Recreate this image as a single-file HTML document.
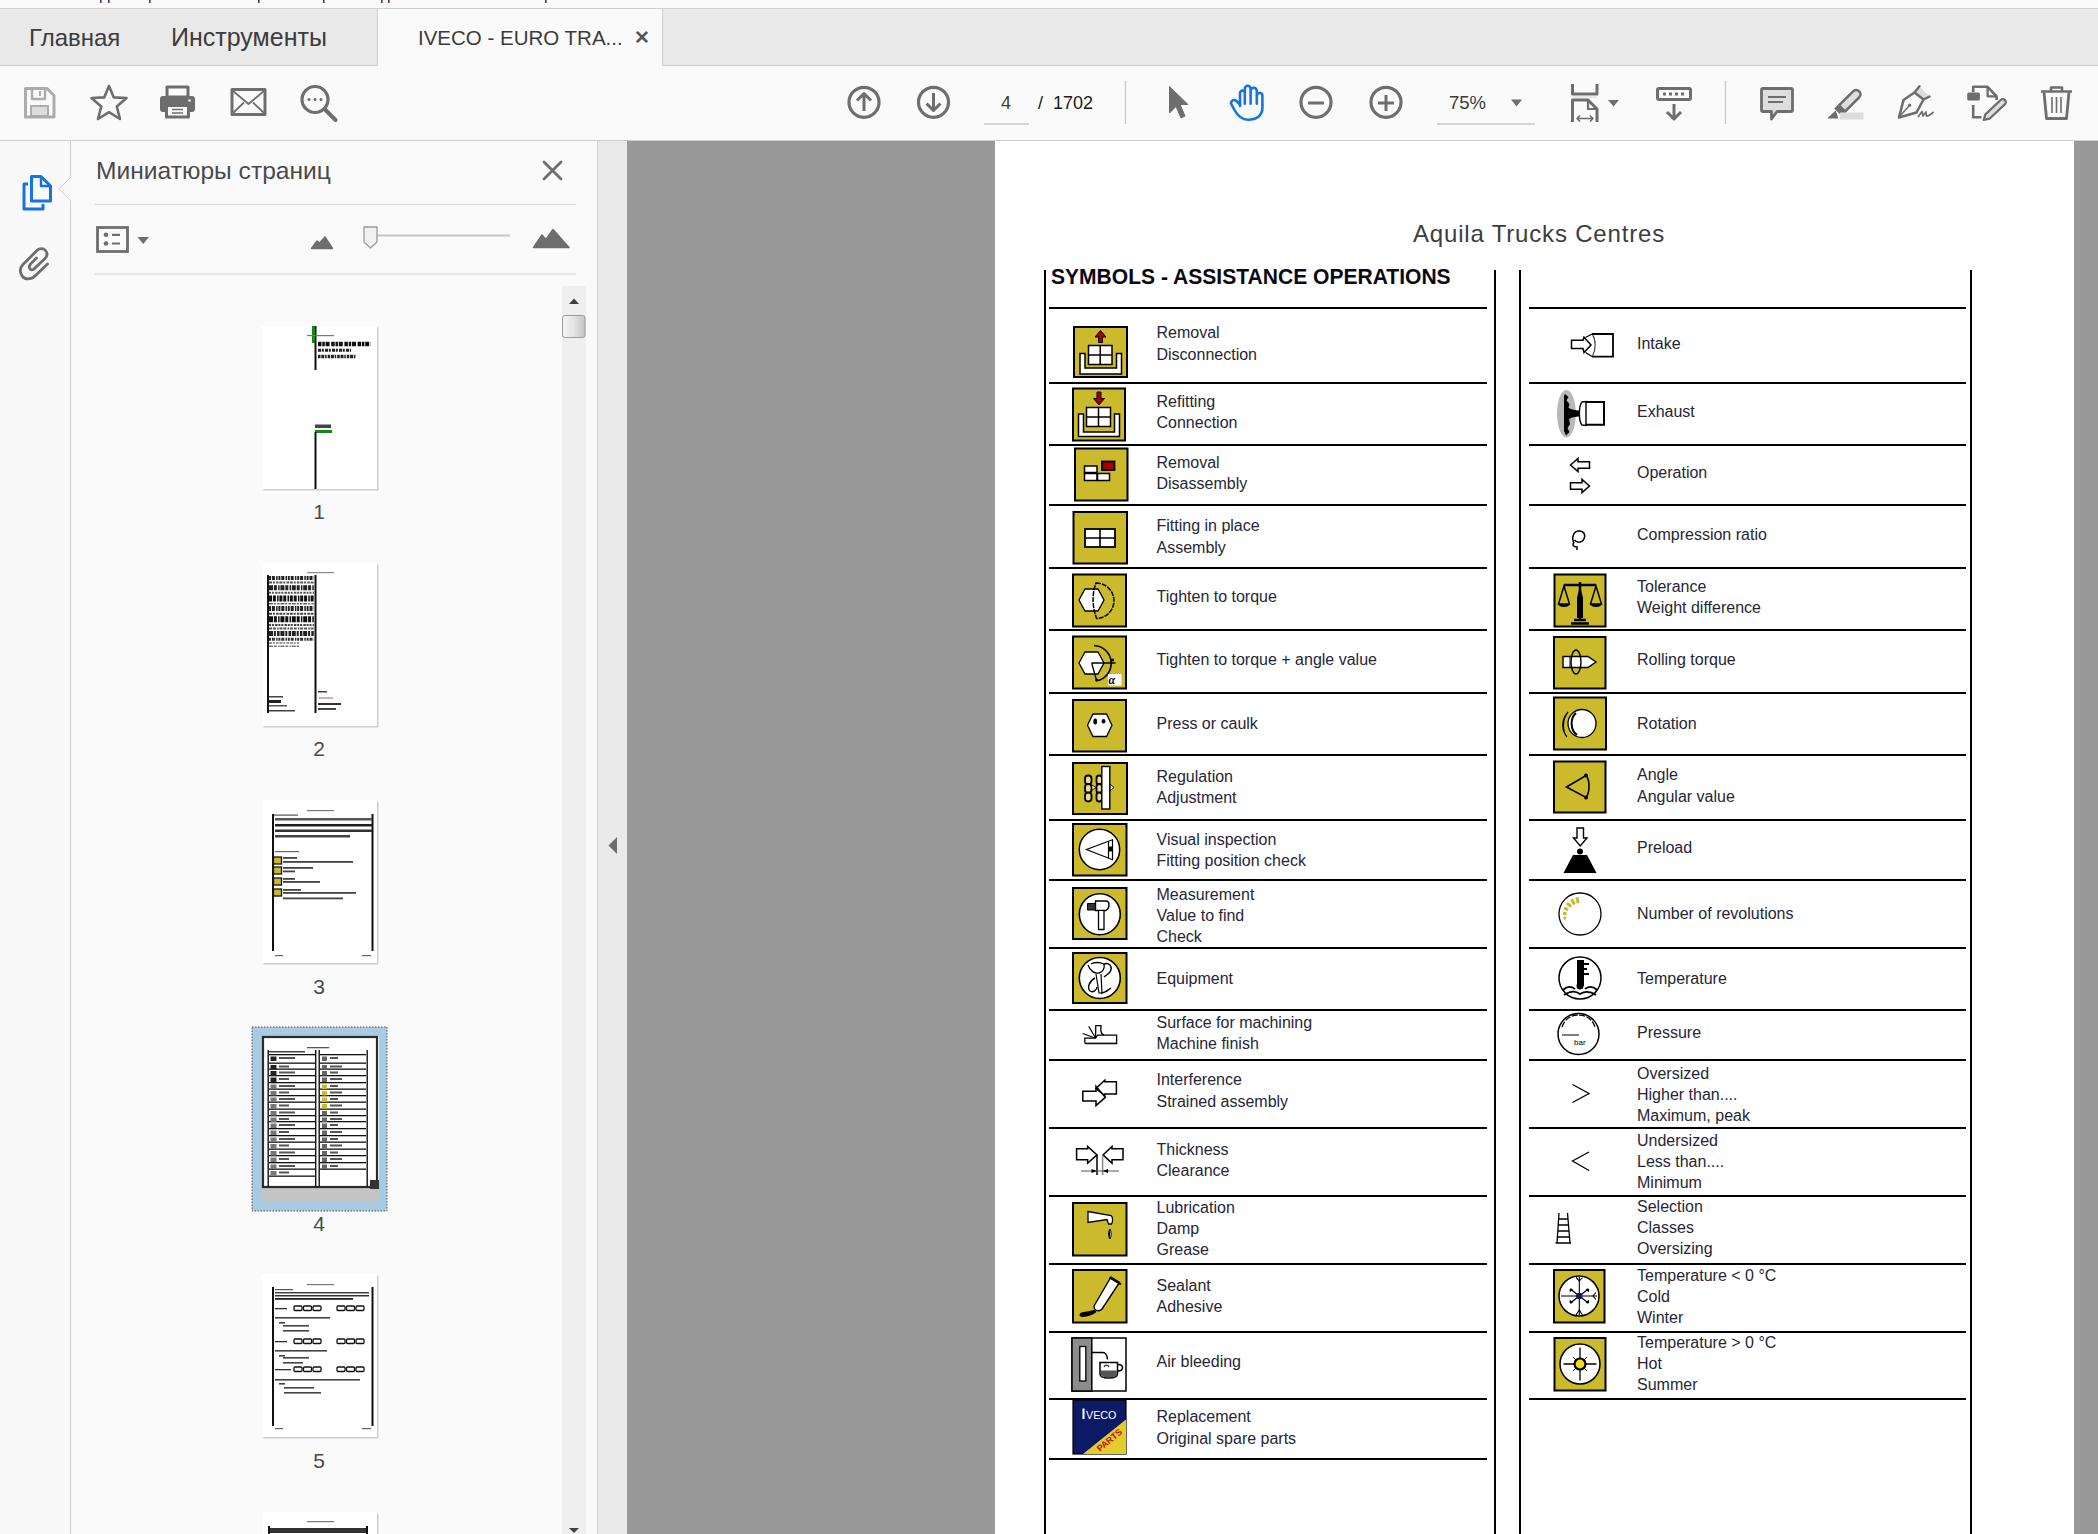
<!DOCTYPE html>
<html><head><meta charset="utf-8">
<style>
*{box-sizing:border-box;margin:0;padding:0}
html,body{width:2098px;height:1534px;overflow:hidden;background:#fafafa;font-family:"Liberation Sans",sans-serif}
.a{position:absolute}
#top{left:0;top:0;width:2098px;height:9px;background:#fafafa;border-bottom:1px solid #cdcdcd}
#tabs{left:0;top:9px;width:2098px;height:57px;background:#e9e9e9;border-bottom:1px solid #cdcdcd}
#atab{left:377px;top:9px;width:286px;height:57px;background:#fafafa;border-left:1px solid #cdcdcd;border-right:1px solid #cdcdcd}
.tt{font-size:23px;color:#3c3c3c;white-space:nowrap}
#tool{left:0;top:66px;width:2098px;height:75px;background:#fafafa}
#rail{left:0;top:141px;width:71px;height:1393px;background:#f9f9f9}
#panel{left:71px;top:141px;width:527px;height:1393px;background:#fafafa;border-right:1px solid #d3d3d3}
#split{left:598px;top:141px;width:29px;height:1393px;background:#eaeaea}
#doc{left:627px;top:141px;width:1471px;height:1393px;background:#999999}
#page{left:995px;top:141px;width:1079px;height:1393px;background:#fff}
svg{position:absolute;overflow:visible}
.ic{fill:none;stroke:#6e6e6e;stroke-width:3}
.pt{position:absolute;font-size:16px;color:#262636;white-space:nowrap;line-height:21px}
.hr{position:absolute;height:2px;background:#111}
.vr{position:absolute;width:2px;background:#111}
</style></head><body>
<div id="top" class="a"></div>
<svg class="a" style="left:0;top:0" width="600" height="8" viewBox="0 0 600 8"><rect x="100" y="0" width="1.6" height="3" fill="#553355"/><rect x="108" y="0" width="1.6" height="3" fill="#553355"/><rect x="149" y="0" width="1.6" height="3" fill="#553355"/><rect x="258" y="0" width="1.6" height="3" fill="#553355"/><rect x="323" y="0" width="1.6" height="3" fill="#553355"/><rect x="381" y="0" width="1.6" height="3" fill="#553355"/><rect x="388" y="0" width="1.6" height="3" fill="#553355"/><rect x="545" y="0" width="1.6" height="3" fill="#553355"/></svg><div id="tabs" class="a"></div>
<div id="atab" class="a"></div>
<div class="a tt" style="left:29px;top:24px;font-size:24px">Главная</div>
<div class="a tt" style="left:171px;top:23px;font-size:25px">Инструменты</div>
<div class="a tt" style="left:418px;top:26px;font-size:20.5px">IVECO - EURO TRA...</div>
<div id="tool" class="a"></div>

<svg class="a" style="left:0;top:0" width="2098" height="140" viewBox="0 0 2098 140">
<g fill="none" stroke="#6e6e6e" stroke-width="3" stroke-linejoin="round">
<!-- save (disabled) -->
<path d="M25.5,88.5 H47 L54,95.5 V117 H25.5 Z" stroke="#acacac" stroke-width="3"/>
<path d="M32,89 V99 H45 V89" stroke="#acacac" stroke-width="2.5"/>
<rect x="31" y="106" width="17" height="10" fill="#dcdcdc" stroke="#acacac" stroke-width="2"/>
<line x1="40" y1="91" x2="40" y2="96" stroke="#acacac" stroke-width="2"/>
<!-- star -->
<path d="M109.0,86 L113.8,97.4 L126.5,98.0 L116.8,106.5 L120,119 L109.0,112.2 L98,119 L101.2,106.5 L91.5,98.0 L104.2,97.4Z" stroke-width="2.6"/>
<!-- print -->
<rect x="167" y="87" width="21" height="10" stroke-width="3"/>
<rect x="160" y="96" width="35" height="16" rx="3" fill="#6e6e6e" stroke="none"/>
<rect x="166.5" y="105.5" width="22" height="11.5" fill="#fafafa" stroke-width="3"/>
<line x1="172" y1="109.5" x2="183" y2="109.5" stroke-width="1.5"/>
<line x1="172" y1="113" x2="183" y2="113" stroke-width="1.5"/>
<circle cx="189.5" cy="100.5" r="1.3" fill="#fafafa" stroke="none"/>
<!-- mail -->
<rect x="232" y="89.5" width="33" height="25" stroke-width="3"/>
<path d="M233,91 L248.5,104 L264,91 M233,113 L244,102.5 M264,113 L253,102.5" stroke-width="1.8"/>
<!-- search -->
<circle cx="315" cy="99.5" r="13" stroke-width="3.2"/>
<line x1="324.5" y1="109" x2="335.5" y2="120" stroke-width="4" stroke-linecap="round"/>
<circle cx="309" cy="99.5" r="1.5" fill="#6e6e6e" stroke="none"/>
<circle cx="315" cy="99.5" r="1.5" fill="#6e6e6e" stroke="none"/>
<circle cx="321" cy="99.5" r="1.5" fill="#6e6e6e" stroke="none"/>
<!-- up / down -->
<circle cx="864" cy="102.3" r="15" stroke-width="3.2"/>
<path d="M864,111 V94 M857,100.5 L864,93.5 L871,100.5" stroke-width="3"/>
<circle cx="933.5" cy="102.3" r="15" stroke-width="3.2"/>
<path d="M933.5,93 V110 M926.5,103.5 L933.5,110.5 L940.5,103.5" stroke-width="3"/>
<!-- page field underline -->
<line x1="984" y1="124" x2="1029" y2="124" stroke="#c8c8c8" stroke-width="1.5"/>
<line x1="1125.5" y1="81" x2="1125.5" y2="124" stroke="#cdcdcd" stroke-width="1.5"/>
<!-- cursor -->
<path d="M1169.5,86.5 L1188,104.5 L1180,104.5 L1185,116 L1181,118 L1176,106.5 L1169.5,113 Z" fill="#6e6e6e" stroke="#6e6e6e" stroke-width="1"/>
<!-- hand -->
<path d="M1240,106 V93 A2.4,2.4 0 0 1 1244.8,93 V103.8 M1244.8,93 V88.7 A2.9,2.9 0 0 1 1250.6,88.7 V103.8 M1250.6,90.9 A3.1,3.1 0 0 1 1256.8,90.9 V103.8 M1256.8,95.8 A2.8,2.8 0 0 1 1262.4,95.8 V108 C1262.4,115.5 1256.5,119.7 1248,119.7 C1241.5,119.7 1237.5,115.5 1234.5,110 L1231.5,104.5 C1229.8,101.5 1233.5,98.5 1236.5,101 L1240,104.5" stroke="#1473e6" stroke-width="2.6" stroke-linecap="round" stroke-linejoin="round"/>
<!-- zoom out / in -->
<circle cx="1316" cy="102.3" r="15" stroke-width="3.2"/>
<line x1="1308" y1="103" x2="1324" y2="103" stroke-width="3"/>
<circle cx="1386" cy="102.3" r="15" stroke-width="3.2"/>
<path d="M1378,103 H1394 M1386,95 V111" stroke-width="3"/>
<!-- zoom field -->
<path d="M1511,99.5 H1522 L1516.5,106.5 Z" fill="#6e6e6e" stroke="none"/>
<line x1="1437" y1="124" x2="1535" y2="124" stroke="#c8c8c8" stroke-width="1.5"/>
<!-- fit page -->
<path d="M1572.5,84 V94 H1597 V84" stroke-width="3"/>
<line x1="1573" y1="97" x2="1597" y2="97" stroke="#d6d6d6" stroke-width="1"/>
<path d="M1572.5,122 V100 H1588 L1597,109 V122" stroke-width="3"/>
<path d="M1588,100.5 V109 H1597" stroke-width="2.2"/>
<path d="M1577,118.5 H1593 M1580,115.5 L1577,118.5 L1580,121.5 M1590,115.5 L1593,118.5 L1590,121.5" stroke-width="1.6"/>
<path d="M1608,100 H1619 L1613.5,106.5 Z" fill="#6e6e6e" stroke="none"/>
<!-- scroll -->
<rect x="1657.5" y="88.5" width="33" height="11" rx="1.5" stroke-width="3"/>
<path d="M1663,94 h3 M1669,94 h3 M1675,94 h3 M1681,94 h3" stroke-width="3"/>
<path d="M1674,104 V119 M1667,112 L1674,119 L1681,112" stroke-width="3"/>
<line x1="1725.5" y1="81" x2="1725.5" y2="124" stroke="#cdcdcd" stroke-width="1.5"/>
<!-- comment -->
<path d="M1763,88.5 H1791 a1.5,1.5 0 0 1 1.5,1.5 V110 a1.5,1.5 0 0 1 -1.5,1.5 H1777 L1771.5,119 V111.5 H1763 a1.5,1.5 0 0 1 -1.5,-1.5 V90 a1.5,1.5 0 0 1 1.5,-1.5 Z" fill="#dedede" stroke-width="2.8"/>
<path d="M1768,97 H1786 M1768,102 H1783" stroke-width="2"/>
<!-- highlighter -->
<g transform="translate(1850.5,100) rotate(-45)">
<path d="M-12,-4.3 H8 A4.3,4.3 0 0 1 8,4.3 H-12 Z" fill="#dedede" stroke-width="2.6"/>
<rect x="-17.5" y="-5.6" width="6" height="11.2" fill="#6e6e6e" stroke="none"/>
</g>
<path d="M1828.5,118 L1835.5,111.5 L1837.5,118 Z" fill="#6e6e6e" stroke="#6e6e6e" stroke-width="1.2"/>
<rect x="1840" y="112.5" width="23.5" height="7" fill="#dcdcdc" stroke="none"/>
<!-- pen sign -->
<path d="M1919.5,86.5 L1930,97 L1923.5,99.5 L1914.5,92.5 Z" fill="#dcdcdc" stroke="none"/>
<path d="M1914.5,92.5 L1919.5,86.2 M1923.5,99.5 L1929.5,96.5" stroke-width="2.4" stroke-linecap="round"/>
<path d="M1899,117.5 L1903.5,100 L1914.5,92.5 L1923.5,99.5 L1916.5,112.5 Z" stroke-width="2.6"/>
<path d="M1899.5,116.5 L1909.5,105.5" stroke-width="1.5"/>
<circle cx="1909.7" cy="105.2" r="1.6" fill="#6e6e6e" stroke="none"/>
<path d="M1918.5,116.5 L1922,111.5 L1923,116 L1926,112 L1926.5,116 C1928,116.5 1930,115 1933,112.5" stroke-width="1.7" stroke-linecap="round"/>
<!-- edit page -->
<path d="M1973.2,92 V86.8 H1987.6 L1996.6,96.3 V100 M1973.2,105 V117.3 H1981.5" stroke-width="2.6"/>
<path d="M1987.6,87 V96.3 H1996.6" stroke-width="2.3"/>
<rect x="1967.2" y="92.5" width="12.7" height="8" rx="1.5" fill="#6e6e6e" stroke="none"/>
<g transform="translate(1994,110.4) rotate(-43)">
<path d="M-9,-3 H12 A3,3 0 0 1 12,3 H-9 L-14,0 Z" fill="#dedede" stroke-width="2.3" stroke-linejoin="round"/>
</g>
<!-- trash -->
<path d="M2041,91.5 H2072 M2051,91.5 V87.5 H2062 V91.5" stroke-width="2.6"/>
<path d="M2044,92 L2046.5,118.5 H2066.5 L2069,92" stroke-width="2.8"/>
<path d="M2052,97 V113 M2056.5,97 V113 M2061,97 V113" stroke-width="1.6"/>
</g>
<line x1="0" y1="140.5" x2="2098" y2="140.5" stroke="#cdcdcd" stroke-width="1.2"/>
</svg>
<div class="a tt" style="left:1001px;top:93px;font-size:18px;color:#3a3a3a">4</div>
<div class="a tt" style="left:1038px;top:93px;font-size:18px;color:#1a1a1a">/&nbsp;&nbsp;1702</div>
<div class="a tt" style="left:1449px;top:92px;font-size:18.5px;color:#3a3a3a">75%</div>
<div class="a tt" style="left:634px;top:27px;font-size:18.5px;color:#555;font-weight:bold">&#x2715;</div>
<div id="rail" class="a"></div>
<div id="panel" class="a"></div>
<div id="split" class="a"></div>
<div id="doc" class="a"></div>
<div id="page" class="a"></div>
<!-- rail + panel -->
<svg class="a" style="left:0;top:140px" width="627" height="1394" viewBox="0 140 627 1394">
<path d="M70.5,140 V177.5 L59,189 L70.5,200.5 V1534" fill="none" stroke="#cfcfcf" stroke-width="1"/>
<g fill="none" stroke="#1473e6" stroke-width="3" stroke-linejoin="round">
<path d="M31.5,176.5 H41 L50.5,186 V201 H31.5 Z"/>
<path d="M41,177 V186 H50" stroke-width="2.4"/>
<path d="M28,184 H24 V209 H43 V204"/>
</g>
<path d="M47.5,264 L35,276 C31,280 25,279.5 22.5,276.5 C19.5,273 19.5,268 23,264.5 L37,250.5 C39.5,248 43.5,248 45.5,250.5 C47.5,253 47.5,256 45,258.5 L34.5,268.5 C32.5,270.5 30,270 29.5,268 C29,266.5 29.5,265 31,263.5 L36.5,258" fill="none" stroke="#6e6e6e" stroke-width="2.8" stroke-linecap="round" stroke-linejoin="round"/>
<!-- close x -->
<path d="M544,162 L561,179 M561,162 L544,179" stroke="#6e6e6e" stroke-width="2.8" stroke-linecap="round"/>
<line x1="95" y1="204.5" x2="576" y2="204.5" stroke="#d2d2d2" stroke-width="1.2"/>
<line x1="95" y1="274" x2="576" y2="274" stroke="#d2d2d2" stroke-width="1.2"/>
<!-- list icon -->
<rect x="97.5" y="227.5" width="30" height="24" fill="none" stroke="#6e6e6e" stroke-width="2.8"/>
<circle cx="106" cy="234.8" r="2.3" fill="#6e6e6e"/><circle cx="106" cy="243.5" r="2.3" fill="#6e6e6e"/>
<path d="M112,234.8 H120 M112,243.5 H120" stroke="#6e6e6e" stroke-width="2.2"/>
<path d="M137.5,237 H149 L143.2,244 Z" fill="#6e6e6e"/>
<!-- small mountain -->
<path d="M311.5,248.5 L317,241 L319.5,243 L325,237 L332.5,248.5 Z" fill="#6e6e6e" stroke="#6e6e6e" stroke-width="1.5" stroke-linejoin="round"/>
<line x1="377" y1="235.5" x2="510" y2="235.5" stroke="#c6c6c6" stroke-width="2"/>
<path d="M364,227 H377 V242 L370.5,248 L364,242 Z" fill="#f1f1f1" stroke="#9a9a9a" stroke-width="1.3" stroke-linejoin="round"/>
<!-- big mountain -->
<path d="M533.5,247.5 L542,235 L546,239.5 L553,229.5 L569,247.5 Z" fill="#6e6e6e" stroke="#6e6e6e" stroke-width="1.5" stroke-linejoin="round"/>
<!-- scrollbar -->
<rect x="562" y="286" width="24" height="1248" fill="#efefef"/>
<path d="M569,304 L574,298.5 L579,304 Z" fill="#404040"/>
<defs><linearGradient id="thg" x1="0" x2="1" y1="0" y2="0"><stop offset="0" stop-color="#f4f4f4"/><stop offset="0.5" stop-color="#e4e4e4"/><stop offset="1" stop-color="#c4c4c4"/></linearGradient></defs><rect x="562.5" y="315.5" width="22.5" height="22" rx="2.5" fill="url(#thg)" stroke="#9a9a9a" stroke-width="1"/>
<path d="M569,1528 L574,1533 L579,1528 Z" fill="#404040"/>
<!-- splitter arrow -->
<path d="M617,837 V854 L608.5,845.5 Z" fill="#6e6e6e"/>
</svg>
<div class="a tt" style="left:96px;top:156.5px;font-size:24.6px;color:#4a4a4a">Миниатюры страниц</div>

<svg class="a" style="left:0;top:0" width="627" height="1534" viewBox="0 0 627 1534"><rect x="263.5" y="327.5" width="115" height="163" fill="#cfcfcf"/><rect x="262" y="326" width="115" height="163" fill="#fff"/><rect x="314.5" y="326" width="2" height="44" fill="#111"/><rect x="312" y="326" width="3" height="17" fill="#118a11"/><rect x="307" y="335" width="27" height="1.2" fill="#777"/><line x1="318" y1="344" x2="371" y2="344" stroke="#111" stroke-width="4.5" stroke-dasharray="3.5,0.8,2.5,0.8,4,1.6"/><line x1="318" y1="350.2" x2="351" y2="350.2" stroke="#222" stroke-width="3" stroke-dasharray="3,0.8,2,1.2"/><line x1="318" y1="356.5" x2="356" y2="356.5" stroke="#222" stroke-width="3.5" stroke-dasharray="2.5,0.8,3,0.8,1.5,1"/><rect x="315" y="424.5" width="16" height="3.5" fill="#444"/><rect x="315" y="430" width="17" height="3" fill="#118a11"/><rect x="314.5" y="432" width="2" height="57" fill="#111"/><rect x="263.5" y="564.5" width="115" height="163" fill="#cfcfcf"/><rect x="262" y="563" width="115" height="163" fill="#fff"/><rect x="307" y="572" width="27" height="1.2" fill="#888"/><rect x="267" y="575" width="2" height="138" fill="#111"/><rect x="314.5" y="575" width="2" height="138" fill="#111"/><line x1="269" y1="578.0" x2="314" y2="578.0" stroke="#222" stroke-width="4" stroke-dasharray="2,0.9,3,1.2,1.5,0.8"/><line x1="269" y1="582.6" x2="314" y2="582.6" stroke="#555" stroke-width="2" stroke-dasharray="3,0.9,2,1.2,2.5,0.8"/><line x1="269" y1="587.7" x2="314" y2="587.7" stroke="#222" stroke-width="5" stroke-dasharray="4,0.9,3,1.2,1.5,0.8"/><line x1="269" y1="592.8" x2="314" y2="592.8" stroke="#555" stroke-width="2" stroke-dasharray="2,0.9,2,1.2,2.5,0.8"/><line x1="269" y1="598.4" x2="314" y2="598.4" stroke="#111" stroke-width="6" stroke-dasharray="3,0.9,3,1.2,1.5,0.8"/><line x1="269" y1="603.8" x2="314" y2="603.8" stroke="#666" stroke-width="1.5" stroke-dasharray="4,0.9,2,1.2,2.5,0.8"/><line x1="269" y1="608.6" x2="314" y2="608.6" stroke="#222" stroke-width="5" stroke-dasharray="2,0.9,3,1.2,1.5,0.8"/><line x1="269" y1="613.7" x2="314" y2="613.7" stroke="#444" stroke-width="2" stroke-dasharray="3,0.9,2,1.2,2.5,0.8"/><line x1="269" y1="619.3" x2="314" y2="619.3" stroke="#111" stroke-width="6" stroke-dasharray="4,0.9,3,1.2,1.5,0.8"/><line x1="269" y1="624.9" x2="314" y2="624.9" stroke="#444" stroke-width="2" stroke-dasharray="2,0.9,2,1.2,2.5,0.8"/><line x1="269" y1="628.5" x2="314" y2="628.5" stroke="#555" stroke-width="2" stroke-dasharray="3,0.9,3,1.2,1.5,0.8"/><line x1="269" y1="633.6" x2="314" y2="633.6" stroke="#222" stroke-width="5" stroke-dasharray="4,0.9,2,1.2,2.5,0.8"/><line x1="269" y1="639.2" x2="314" y2="639.2" stroke="#333" stroke-width="3" stroke-dasharray="2,0.9,3,1.2,1.5,0.8"/><line x1="269" y1="643.1" x2="299" y2="643.1" stroke="#777" stroke-width="1.5" stroke-dasharray="3,0.9,2,1.2,2.5,0.8"/><line x1="269" y1="646.2" x2="299" y2="646.2" stroke="#777" stroke-width="1.5" stroke-dasharray="4,0.9,3,1.2,1.5,0.8"/><rect x="269" y="696" width="14" height="1.5" fill="#444"/><rect x="269" y="700" width="12" height="3" fill="#222"/><rect x="269" y="705" width="18" height="1.5" fill="#555"/><rect x="269" y="710" width="26" height="1.5" fill="#444"/><rect x="318" y="691" width="9" height="1.5" fill="#444"/><rect x="319" y="697" width="14" height="2" fill="#d9b0b0"/><rect x="318" y="703" width="23" height="2" fill="#333"/><rect x="318" y="708" width="18" height="2" fill="#444"/><rect x="263.5" y="801.5" width="115" height="163" fill="#cfcfcf"/><rect x="262" y="800" width="115" height="163" fill="#fff"/><rect x="307" y="810" width="27" height="1.2" fill="#777"/><rect x="272" y="814" width="2" height="137" fill="#111"/><rect x="371.5" y="814" width="2" height="137" fill="#111"/><rect x="274" y="814.5" width="24" height="1.2" fill="#555"/><rect x="275" y="818" width="97" height="2.5" fill="#555"/><rect x="275" y="824" width="97" height="2.5" fill="#222"/><rect x="275" y="829.5" width="97" height="2.5" fill="#333"/><rect x="275" y="835" width="75" height="2.5" fill="#444"/><rect x="275" y="851" width="24" height="1.2" fill="#666"/><rect x="273.5" y="857" width="8" height="7" fill="#cbba2c" stroke="#111" stroke-width="1.3"/><rect x="273.5" y="867" width="8" height="7" fill="#cbba2c" stroke="#111" stroke-width="1.3"/><rect x="273.5" y="878" width="8" height="7" fill="#cbba2c" stroke="#111" stroke-width="1.3"/><rect x="273.5" y="889" width="8" height="7" fill="#cbba2c" stroke="#111" stroke-width="1.3"/><rect x="283" y="857" width="14" height="1.8" fill="#444"/><rect x="283" y="861" width="70" height="1.8" fill="#444"/><rect x="283" y="867" width="30" height="1.8" fill="#444"/><rect x="283" y="870.5" width="12" height="1.8" fill="#444"/><rect x="283" y="878" width="12" height="1.8" fill="#444"/><rect x="283" y="881" width="37" height="1.8" fill="#444"/><rect x="283" y="889" width="18" height="1.8" fill="#444"/><rect x="283" y="892" width="73" height="1.8" fill="#444"/><rect x="283" y="897.5" width="60" height="1.8" fill="#444"/><rect x="275" y="955" width="8" height="1.2" fill="#666"/><rect x="362" y="955" width="9" height="1.2" fill="#666"/><rect x="252" y="1027" width="135" height="184" fill="#a8cbe4" stroke="#6b4a3a" stroke-width="1" stroke-dasharray="1.5,1.5"/><rect x="262" y="1036" width="117" height="165" fill="#fff"/><rect x="262" y="1187" width="117" height="14" fill="#c4c4c4"/><rect x="263" y="1037" width="114" height="150" fill="none" stroke="#2a2a2a" stroke-width="2.2"/><rect x="370" y="1180" width="9" height="9" fill="#333"/><rect x="307" y="1047" width="22" height="1.3" fill="#555"/><rect x="267.5" y="1050" width="1.4" height="137" fill="#111"/><rect x="315" y="1050" width="1.4" height="137" fill="#111"/><rect x="318.5" y="1050" width="1.4" height="137" fill="#111"/><rect x="366.5" y="1050" width="1.4" height="137" fill="#111"/><rect x="269" y="1051" width="36" height="1.5" fill="#444"/><rect x="269" y="1054" width="46" height="1.3" fill="#111"/><rect x="320" y="1054" width="46" height="1.3" fill="#111"/><rect x="269" y="1062.5" width="46" height="1.3" fill="#111"/><rect x="320" y="1062.5" width="46" height="1.3" fill="#111"/><rect x="269" y="1068.5" width="46" height="1.3" fill="#111"/><rect x="320" y="1068.5" width="46" height="1.3" fill="#111"/><rect x="269" y="1075" width="46" height="1.3" fill="#111"/><rect x="320" y="1075" width="46" height="1.3" fill="#111"/><rect x="269" y="1082" width="46" height="1.3" fill="#111"/><rect x="320" y="1082" width="46" height="1.3" fill="#111"/><rect x="269" y="1088.5" width="46" height="1.3" fill="#111"/><rect x="320" y="1088.5" width="46" height="1.3" fill="#111"/><rect x="269" y="1095" width="46" height="1.3" fill="#111"/><rect x="320" y="1095" width="46" height="1.3" fill="#111"/><rect x="269" y="1101.5" width="46" height="1.3" fill="#111"/><rect x="320" y="1101.5" width="46" height="1.3" fill="#111"/><rect x="269" y="1108.5" width="46" height="1.3" fill="#111"/><rect x="320" y="1108.5" width="46" height="1.3" fill="#111"/><rect x="269" y="1115" width="46" height="1.3" fill="#111"/><rect x="320" y="1115" width="46" height="1.3" fill="#111"/><rect x="269" y="1121" width="46" height="1.3" fill="#111"/><rect x="320" y="1121" width="46" height="1.3" fill="#111"/><rect x="269" y="1128" width="46" height="1.3" fill="#111"/><rect x="320" y="1128" width="46" height="1.3" fill="#111"/><rect x="269" y="1135" width="46" height="1.3" fill="#111"/><rect x="320" y="1135" width="46" height="1.3" fill="#111"/><rect x="269" y="1141.5" width="46" height="1.3" fill="#111"/><rect x="320" y="1141.5" width="46" height="1.3" fill="#111"/><rect x="269" y="1148.5" width="46" height="1.3" fill="#111"/><rect x="320" y="1148.5" width="46" height="1.3" fill="#111"/><rect x="269" y="1155" width="46" height="1.3" fill="#111"/><rect x="320" y="1155" width="46" height="1.3" fill="#111"/><rect x="269" y="1162" width="46" height="1.3" fill="#111"/><rect x="320" y="1162" width="46" height="1.3" fill="#111"/><rect x="269" y="1168.5" width="46" height="1.3" fill="#111"/><rect x="320" y="1168.5" width="46" height="1.3" fill="#111"/><rect x="269" y="1175.5" width="46" height="1.3" fill="#111"/><rect x="270.5" y="1056.5" width="6" height="4.5" fill="#222"/><rect x="279" y="1057" width="16" height="2" fill="#555"/><rect x="270.5" y="1065.0" width="6" height="4.5" fill="#222"/><rect x="279" y="1065.5" width="10" height="2" fill="#555"/><rect x="270.5" y="1071.0" width="6" height="4.5" fill="#222"/><rect x="279" y="1071.5" width="16" height="2" fill="#555"/><rect x="270.5" y="1077.5" width="6" height="4.5" fill="#222"/><rect x="279" y="1078" width="10" height="2" fill="#555"/><rect x="270.5" y="1084.5" width="6" height="4.5" fill="#777"/><rect x="279" y="1085" width="16" height="2" fill="#555"/><rect x="270.5" y="1091.0" width="6" height="4.5" fill="#777"/><rect x="279" y="1091.5" width="10" height="2" fill="#555"/><rect x="270.5" y="1097.5" width="6" height="4.5" fill="#777"/><rect x="279" y="1098" width="16" height="2" fill="#555"/><rect x="270.5" y="1104.0" width="6" height="4.5" fill="#777"/><rect x="279" y="1104.5" width="10" height="2" fill="#555"/><rect x="270.5" y="1111.0" width="6" height="4.5" fill="#777"/><rect x="279" y="1111.5" width="16" height="2" fill="#555"/><rect x="270.5" y="1117.5" width="6" height="4.5" fill="#777"/><rect x="279" y="1118" width="10" height="2" fill="#555"/><rect x="270.5" y="1123.5" width="6" height="4.5" fill="#777"/><rect x="279" y="1124" width="16" height="2" fill="#555"/><rect x="270.5" y="1130.5" width="6" height="4.5" fill="#777"/><rect x="279" y="1131" width="10" height="2" fill="#555"/><rect x="270.5" y="1137.5" width="6" height="4.5" fill="#777"/><rect x="279" y="1138" width="16" height="2" fill="#555"/><rect x="270.5" y="1144.0" width="6" height="4.5" fill="#777"/><rect x="279" y="1144.5" width="10" height="2" fill="#555"/><rect x="270.5" y="1151.0" width="6" height="4.5" fill="#777"/><rect x="279" y="1151.5" width="16" height="2" fill="#555"/><rect x="270.5" y="1157.5" width="6" height="4.5" fill="#777"/><rect x="279" y="1158" width="10" height="2" fill="#555"/><rect x="270.5" y="1164.5" width="6" height="4.5" fill="#777"/><rect x="279" y="1165" width="16" height="2" fill="#555"/><rect x="270.5" y="1171.0" width="6" height="4.5" fill="#777"/><rect x="279" y="1171.5" width="10" height="2" fill="#555"/><rect x="322" y="1056.5" width="5" height="4.5" fill="#666"/><rect x="330" y="1057" width="8" height="2" fill="#555"/><rect x="322" y="1065.0" width="5" height="4.5" fill="#666"/><rect x="330" y="1065.5" width="12" height="2" fill="#555"/><rect x="322" y="1071.0" width="5" height="4.5" fill="#666"/><rect x="330" y="1071.5" width="8" height="2" fill="#555"/><rect x="322" y="1077.5" width="5" height="4.5" fill="#666"/><rect x="330" y="1078" width="12" height="2" fill="#555"/><rect x="322" y="1084.5" width="5" height="4.5" fill="#cbba2c"/><rect x="330" y="1085" width="8" height="2" fill="#555"/><rect x="322" y="1091.0" width="5" height="4.5" fill="#cbba2c"/><rect x="330" y="1091.5" width="12" height="2" fill="#555"/><rect x="322" y="1097.5" width="5" height="4.5" fill="#cbba2c"/><rect x="330" y="1098" width="8" height="2" fill="#555"/><rect x="322" y="1104.0" width="5" height="4.5" fill="#cbba2c"/><rect x="330" y="1104.5" width="12" height="2" fill="#555"/><rect x="322" y="1111.0" width="5" height="4.5" fill="#666"/><rect x="330" y="1111.5" width="8" height="2" fill="#555"/><rect x="322" y="1117.5" width="5" height="4.5" fill="#666"/><rect x="330" y="1118" width="12" height="2" fill="#555"/><rect x="322" y="1123.5" width="5" height="4.5" fill="#666"/><rect x="330" y="1124" width="8" height="2" fill="#555"/><rect x="322" y="1130.5" width="5" height="4.5" fill="#666"/><rect x="330" y="1131" width="12" height="2" fill="#555"/><rect x="322" y="1137.5" width="5" height="4.5" fill="#666"/><rect x="330" y="1138" width="8" height="2" fill="#555"/><rect x="322" y="1144.0" width="5" height="4.5" fill="#666"/><rect x="330" y="1144.5" width="12" height="2" fill="#555"/><rect x="322" y="1151.0" width="5" height="4.5" fill="#666"/><rect x="330" y="1151.5" width="8" height="2" fill="#555"/><rect x="322" y="1157.5" width="5" height="4.5" fill="#666"/><rect x="330" y="1158" width="12" height="2" fill="#555"/><rect x="322" y="1164.5" width="5" height="4.5" fill="#666"/><rect x="330" y="1165" width="8" height="2" fill="#555"/><rect x="263.5" y="1275.5" width="115" height="163" fill="#cfcfcf"/><rect x="262" y="1274" width="115" height="163" fill="#fff"/><rect x="307" y="1284" width="27" height="1.2" fill="#777"/><rect x="272" y="1287" width="2" height="139" fill="#111"/><rect x="371.5" y="1287" width="2" height="139" fill="#111"/><rect x="275" y="1289" width="18" height="1.2" fill="#555"/><rect x="275" y="1292" width="94" height="1.5" fill="#444"/><rect x="275" y="1295" width="94" height="1.5" fill="#333"/><rect x="275" y="1298" width="78" height="1.8" fill="#222"/><rect x="275" y="1308" width="12" height="1.3" fill="#333"/><rect x="294" y="1306" width="8" height="4.5" rx="1" fill="none" stroke="#111" stroke-width="1.3"/><rect x="303.5" y="1306" width="8" height="4.5" rx="1" fill="none" stroke="#111" stroke-width="1.3"/><rect x="313" y="1306" width="8" height="4.5" rx="1" fill="none" stroke="#111" stroke-width="1.3"/><rect x="337" y="1306" width="8" height="4.5" rx="1" fill="none" stroke="#111" stroke-width="1.3"/><rect x="346.5" y="1306" width="8" height="4.5" rx="1" fill="none" stroke="#111" stroke-width="1.3"/><rect x="356" y="1306" width="8" height="4.5" rx="1" fill="none" stroke="#111" stroke-width="1.3"/><rect x="275" y="1341" width="12" height="1.3" fill="#333"/><rect x="294" y="1339" width="8" height="4.5" rx="1" fill="none" stroke="#111" stroke-width="1.3"/><rect x="303.5" y="1339" width="8" height="4.5" rx="1" fill="none" stroke="#111" stroke-width="1.3"/><rect x="313" y="1339" width="8" height="4.5" rx="1" fill="none" stroke="#111" stroke-width="1.3"/><rect x="337" y="1339" width="8" height="4.5" rx="1" fill="none" stroke="#111" stroke-width="1.3"/><rect x="346.5" y="1339" width="8" height="4.5" rx="1" fill="none" stroke="#111" stroke-width="1.3"/><rect x="356" y="1339" width="8" height="4.5" rx="1" fill="none" stroke="#111" stroke-width="1.3"/><rect x="275" y="1369" width="16" height="1.3" fill="#333"/><rect x="294" y="1367" width="8" height="4.5" rx="1" fill="none" stroke="#111" stroke-width="1.3"/><rect x="303.5" y="1367" width="8" height="4.5" rx="1" fill="none" stroke="#111" stroke-width="1.3"/><rect x="313" y="1367" width="8" height="4.5" rx="1" fill="none" stroke="#111" stroke-width="1.3"/><rect x="337" y="1367" width="8" height="4.5" rx="1" fill="none" stroke="#111" stroke-width="1.3"/><rect x="346.5" y="1367" width="8" height="4.5" rx="1" fill="none" stroke="#111" stroke-width="1.3"/><rect x="356" y="1367" width="8" height="4.5" rx="1" fill="none" stroke="#111" stroke-width="1.3"/><rect x="275" y="1317" width="55" height="1.6" fill="#444"/><rect x="279" y="1322" width="6" height="1.6" fill="#444"/><rect x="283" y="1325" width="26" height="1.6" fill="#444"/><rect x="283" y="1330" width="26" height="1.6" fill="#444"/><rect x="275" y="1350" width="52" height="1.6" fill="#444"/><rect x="279" y="1355" width="6" height="1.6" fill="#444"/><rect x="283" y="1357" width="26" height="1.6" fill="#444"/><rect x="283" y="1362" width="20" height="1.6" fill="#444"/><rect x="275" y="1379" width="85" height="1.6" fill="#444"/><rect x="279" y="1383" width="6" height="1.6" fill="#444"/><rect x="284" y="1387" width="30" height="1.6" fill="#444"/><rect x="284" y="1392" width="37" height="1.6" fill="#444"/><rect x="275" y="1428" width="8" height="1.2" fill="#666"/><rect x="362" y="1428" width="9" height="1.2" fill="#666"/><rect x="263.5" y="1513.5" width="115" height="30" fill="#cfcfcf"/><rect x="262" y="1512" width="115" height="30" fill="#fff"/><rect x="307" y="1521" width="27" height="1.2" fill="#777"/><rect x="268" y="1526" width="2" height="10" fill="#111"/><rect x="366" y="1526" width="2" height="10" fill="#111"/><rect x="270" y="1528" width="96" height="5" fill="#333"/></svg><div class="a tt" style="left:309px;top:500.1px;font-size:21px;color:#4a4a4a;width:20px;text-align:center">1</div><div class="a tt" style="left:309px;top:737.4px;font-size:21px;color:#4a4a4a;width:20px;text-align:center">2</div><div class="a tt" style="left:309px;top:974.7px;font-size:21px;color:#4a4a4a;width:20px;text-align:center">3</div><div class="a tt" style="left:309px;top:1212.0px;font-size:21px;color:#4a4a4a;width:20px;text-align:center">4</div><div class="a tt" style="left:309px;top:1449.3px;font-size:21px;color:#4a4a4a;width:20px;text-align:center">5</div>
<svg class="a" style="left:0;top:0" width="2098" height="1534" viewBox="0 0 2098 1534"><rect x="1049" y="307" width="438" height="2" fill="#000"/><rect x="1529" y="307" width="437" height="2" fill="#000"/><rect x="1049" y="382" width="438" height="2" fill="#000"/><rect x="1529" y="382" width="437" height="2" fill="#000"/><rect x="1049" y="444" width="438" height="2" fill="#000"/><rect x="1529" y="444" width="437" height="2" fill="#000"/><rect x="1049" y="504" width="438" height="2" fill="#000"/><rect x="1529" y="504" width="437" height="2" fill="#000"/><rect x="1049" y="567" width="438" height="2" fill="#000"/><rect x="1529" y="567" width="437" height="2" fill="#000"/><rect x="1049" y="629" width="438" height="2" fill="#000"/><rect x="1529" y="629" width="437" height="2" fill="#000"/><rect x="1049" y="692" width="438" height="2" fill="#000"/><rect x="1529" y="692" width="437" height="2" fill="#000"/><rect x="1049" y="754" width="438" height="2" fill="#000"/><rect x="1529" y="754" width="437" height="2" fill="#000"/><rect x="1049" y="819" width="438" height="2" fill="#000"/><rect x="1529" y="819" width="437" height="2" fill="#000"/><rect x="1049" y="879" width="438" height="2" fill="#000"/><rect x="1529" y="879" width="437" height="2" fill="#000"/><rect x="1049" y="947" width="438" height="2" fill="#000"/><rect x="1529" y="947" width="437" height="2" fill="#000"/><rect x="1049" y="1009" width="438" height="2" fill="#000"/><rect x="1529" y="1009" width="437" height="2" fill="#000"/><rect x="1049" y="1059" width="438" height="2" fill="#000"/><rect x="1529" y="1059" width="437" height="2" fill="#000"/><rect x="1049" y="1127" width="438" height="2" fill="#000"/><rect x="1529" y="1127" width="437" height="2" fill="#000"/><rect x="1049" y="1195" width="438" height="2" fill="#000"/><rect x="1529" y="1195" width="437" height="2" fill="#000"/><rect x="1049" y="1263" width="438" height="2" fill="#000"/><rect x="1529" y="1263" width="437" height="2" fill="#000"/><rect x="1049" y="1331" width="438" height="2" fill="#000"/><rect x="1529" y="1331" width="437" height="2" fill="#000"/><rect x="1049" y="1398" width="438" height="2" fill="#000"/><rect x="1529" y="1398" width="437" height="2" fill="#000"/><rect x="1049" y="1458" width="438" height="2" fill="#000"/><rect x="1044" y="270" width="2" height="1264" fill="#000"/><rect x="1494" y="270" width="2" height="1264" fill="#000"/><rect x="1519" y="270" width="2" height="1264" fill="#000"/><rect x="1970" y="270" width="2" height="1264" fill="#000"/><rect x="1074" y="327" width="53" height="50" fill="#cbba2c" stroke="#000" stroke-width="2"/><path d="M1080,353.5 H1085 V368 H1116.5 V353.5 H1121.5 V374 H1080 Z" fill="#fff" stroke="#000" stroke-width="1.5"/><rect x="1088.5" y="345.5" width="23.5" height="19" fill="#fff" stroke="#000" stroke-width="1.5"/><path d="M1100.2,346 V364 M1089,355 H1111.5" stroke="#000" stroke-width="1.5"/><path d="M1100.5,330.5 L1106,337 H1102.5 V342.5 H1098.5 V337 H1095 Z" fill="#a40000" stroke="#000" stroke-width="1"/><rect x="1073" y="388.5" width="52" height="52.0" fill="#cbba2c" stroke="#000" stroke-width="2"/><path d="M1078.5,414 H1083.5 V432 H1114.5 V414 H1119.5 V436.5 H1078.5 Z" fill="#fff" stroke="#000" stroke-width="1.5"/><rect x="1086.5" y="407.5" width="24" height="19" fill="#fff" stroke="#000" stroke-width="1.5"/><path d="M1098.5,408 V426 M1087,417 H1110" stroke="#000" stroke-width="1.5"/><path d="M1099,405 L1104.5,398.5 H1101 V392 H1097 V398.5 H1093.5 Z" fill="#a40000" stroke="#000" stroke-width="1"/><rect x="1075" y="448.5" width="52.5" height="52.0" fill="#cbba2c" stroke="#000" stroke-width="2"/><rect x="1084.5" y="466" width="12.5" height="6.5" fill="#fff" stroke="#000" stroke-width="1.5"/><rect x="1084.5" y="473.5" width="12.5" height="7" fill="#fff" stroke="#000" stroke-width="1.5"/><rect x="1097.5" y="473.5" width="12" height="7" fill="#fff" stroke="#000" stroke-width="1.5"/><rect x="1102" y="461.5" width="12.5" height="8.5" fill="#a40000" stroke="#000" stroke-width="1.8"/><rect x="1073.5" y="512" width="53.5" height="51.5" fill="#cbba2c" stroke="#000" stroke-width="2"/><rect x="1085" y="529" width="30" height="18" fill="#fff" stroke="#000" stroke-width="1.8"/><path d="M1100,529 V547 M1085,538 H1115" stroke="#000" stroke-width="1.6"/><rect x="1073" y="574.5" width="53" height="52.0" fill="#cbba2c" stroke="#000" stroke-width="2"/><path d="M1079,600 L1085,589 H1098 L1104,600 L1098,611 H1085 Z" fill="#fff" stroke="#000" stroke-width="1.3"/><path d="M1096,583 A17.6,17.7 0 0 1 1096.6,618.5 C1092,606 1092,594 1096,583 Z" fill="none" stroke="#000" stroke-width="1.5" stroke-dasharray="5,1"/><rect x="1073" y="636.5" width="53" height="52.0" fill="#cbba2c" stroke="#000" stroke-width="2"/><path d="M1079,663 L1085,652 H1098 L1104,663 L1098,674 H1085 Z" fill="#fff" stroke="#000" stroke-width="1.3"/><path d="M1094,645.5 A17.8,17.8 0 0 1 1096.6,680.8" fill="none" stroke="#000" stroke-width="1.6"/><path d="M1091.6,663 H1115.5 M1091.6,663 L1096.6,680.5" stroke="#000" stroke-width="1.3" fill="none"/><circle cx="1112.5" cy="660" r="1.6" fill="#000"/><circle cx="1096.6" cy="680" r="1.5" fill="#000"/><rect x="1108" y="674" width="13.5" height="11.5" fill="#fff"/><text x="1108.5" y="684" font-size="12" font-family="Liberation Serif" font-style="italic" font-weight="bold" fill="#000">&#945;</text><rect x="1073" y="700" width="53" height="51.5" fill="#cbba2c" stroke="#000" stroke-width="2"/><path d="M1087.5,725.2 L1093,714 H1106.5 L1112,725.2 L1106.5,736.5 H1093 Z" fill="#fff" stroke="#000" stroke-width="1.3"/><ellipse cx="1095.2" cy="721.5" rx="1.9" ry="2.9" fill="#000"/><ellipse cx="1103.5" cy="721.3" rx="1.9" ry="2.3" fill="#000"/><rect x="1073" y="763" width="54" height="51" fill="#cbba2c" stroke="#000" stroke-width="2"/><path d="M1091,784.5 L1096,787.5 L1091,790.5 Z M1110,784 L1114,787.5 L1110,791 Z" fill="#fff" stroke="#000" stroke-width="0.8"/><g fill="#e6dc8a" stroke="#000" stroke-width="1.8"><rect x="1085" y="775.5" width="6.5" height="9" rx="3.2"/><rect x="1085" y="784" width="6.5" height="9" rx="3.2"/><rect x="1085" y="792.5" width="6.5" height="9" rx="3.2"/><rect x="1096.5" y="775.5" width="5.5" height="9" rx="2.7"/><rect x="1096.5" y="784" width="5.5" height="9" rx="2.7"/><rect x="1096.5" y="792.5" width="5.5" height="9" rx="2.7"/></g><rect x="1101.8" y="766.5" width="8" height="42.5" fill="#fff" stroke="#000" stroke-width="1.4"/><rect x="1073" y="824" width="53.5" height="51.5" fill="#cbba2c" stroke="#000" stroke-width="2"/><circle cx="1099.5" cy="849.5" r="20.2" fill="#fff" stroke="#000" stroke-width="1.5"/><path d="M1112.5,839.8 L1086.5,849.5 L1112.5,859.7 Z" fill="none" stroke="#000" stroke-width="1.2"/><path d="M1108.5,841.5 V858" stroke="#000" stroke-width="1.2"/><rect x="1109" y="846.5" width="3" height="5" fill="#000"/><rect x="1073" y="888" width="53.5" height="51" fill="#cbba2c" stroke="#000" stroke-width="2"/><circle cx="1099.8" cy="914.2" r="20.5" fill="#fff" stroke="#000" stroke-width="1.6"/><path d="M1087.5,903.5 H1096 V910 H1087.5 Z" fill="#333" stroke="#000" stroke-width="1"/><path d="M1095.5,901 H1106 C1110,901 1110,908 1106,910.5 H1095.5 Z" fill="#fff" stroke="#000" stroke-width="1.4"/><path d="M1098.5,911 V929.5 H1104 V911" fill="#fff" stroke="#000" stroke-width="1.3"/><rect x="1073" y="953" width="53.5" height="50" fill="#cbba2c" stroke="#000" stroke-width="2"/><circle cx="1099.8" cy="978" r="20.5" fill="#fff" stroke="#000" stroke-width="1.6"/><path d="M1088,965 C1090,971 1095,974 1099,973 C1103,972 1105,968 1104,964 M1091,964 C1094,962 1100,962 1104,964" fill="none" stroke="#000" stroke-width="1.3"/><path d="M1096,974 L1099,993 H1102 L1101,974" fill="#fff" stroke="#000" stroke-width="1.2"/><path d="M1104,964 C1109,962 1112,966 1111,970 C1110,974 1106,975 1104,977 M1095,978 C1089,981 1087,988 1090,991 C1093,993 1097,990 1097,987 M1101,993 C1105,993 1108,990 1111,988" fill="none" stroke="#000" stroke-width="1.4"/><path d="M1084.8,1038.2 H1095.5 L1097.5,1035.2 H1116.6 V1043.6 H1086 C1085,1043.6 1084.8,1042.8 1084.8,1042 Z" fill="#fff" stroke="#000" stroke-width="1.3"/><path d="M1086,1042.6 H1116" stroke="#999" stroke-width="1"/><path d="M1095.5,1038 L1095.8,1025.6 H1101 L1100.8,1030.5 C1101,1033 1102.5,1034.5 1104,1035.2" fill="none" stroke="#000" stroke-width="1.3"/><path d="M1082.6,1033.6 L1095,1038 M1088.7,1026.4 L1095,1037" stroke="#000" stroke-width="1.1"/><path d="M1082.8,1091.2 H1096 V1086.2 L1105.3,1097.3 L1096,1105.6 V1101.1 H1082.8 Z" fill="none" stroke="#000" stroke-width="1.5" stroke-linejoin="miter"/><path d="M1116.4,1081.8 H1104.8 V1080.1 L1095.9,1088.4 L1104.8,1095.6 V1094 H1116.4 Z" fill="none" stroke="#000" stroke-width="1.5" stroke-linejoin="miter"/><path d="M1076.6,1148.8 H1087.6 V1146.5 L1097,1154.9 L1087.6,1163.2 V1159.8 H1076.6 Z M1123,1148.8 H1112 V1146.5 L1103,1154.9 L1112,1163.2 V1159.8 H1123 Z" fill="none" stroke="#000" stroke-width="1.5" stroke-linejoin="miter"/><path d="M1097,1155 V1175" stroke="#000" stroke-width="1.5"/><path d="M1102.6,1155 V1175" stroke="#888" stroke-width="1.5"/><path d="M1081,1171 H1119" stroke="#555" stroke-width="1"/><path d="M1091.5,1169 L1097,1171 L1091.5,1173 Z M1108,1169 L1102.6,1171 L1108,1173 Z" fill="#000"/><rect x="1073" y="1203" width="53.5" height="52.5" fill="#cbba2c" stroke="#000" stroke-width="2"/><path d="M1088,1211.5 L1111,1215.5 C1113,1217 1113,1222 1111.5,1224 L1108.5,1224 L1107,1219.5 L1088,1222.5 Z" fill="#fff" stroke="#000" stroke-width="1.3"/><path d="M1110,1229 C1108,1232 1108,1236 1110,1239 C1111.5,1236 1111.5,1232 1110,1229 Z" fill="#fff" stroke="#000" stroke-width="1"/><path d="M1110,1229.5 C1108.5,1232 1108.5,1236 1110,1238.5 Z" fill="#000"/><rect x="1073" y="1270" width="53.5" height="52.5" fill="#cbba2c" stroke="#000" stroke-width="2"/><path d="M1111,1277 L1119.5,1282.5 L1102,1309 C1100,1311.5 1096,1311.5 1094.5,1308.5 L1094,1306 Z" fill="#fff" stroke="#000" stroke-width="1.4"/><path d="M1109.5,1277.5 L1121,1284.5" stroke="#000" stroke-width="2"/><path d="M1095,1309.5 C1091,1311 1086,1311.5 1081.5,1312.5 C1078.5,1313.5 1079,1317 1082.5,1317 C1088,1316.5 1093,1315 1096.5,1312 Z" fill="#000"/><rect x="1072" y="1338" width="54" height="53" fill="#fff" stroke="#000" stroke-width="1.5"/><rect x="1072" y="1338" width="19.8" height="53" fill="#8c8c8c" stroke="#000" stroke-width="1.5"/><rect x="1079.8" y="1346.5" width="6" height="34.5" fill="#fff" stroke="#000" stroke-width="1.3"/><path d="M1091.5,1352.5 H1103 C1105.5,1352.5 1107,1355 1107.5,1359.5" fill="none" stroke="#000" stroke-width="1.5"/><path d="M1100,1362.5 H1117.5 V1374 C1117.5,1377 1114,1378 1108.7,1378 C1103.5,1378 1100,1377 1100,1374 Z M1117.5,1364.5 C1124,1363.5 1124.5,1371.5 1117.5,1371" fill="#fff" stroke="#000" stroke-width="1.5"/><path d="M1100.8,1370.5 H1116.8 V1374 C1116.8,1376.5 1113.5,1377.3 1108.7,1377.3 C1104,1377.3 1100.8,1376.5 1100.8,1374 Z" fill="#555"/><path d="M1104,1367 C1105,1364.5 1108,1364.5 1109,1367" fill="none" stroke="#333" stroke-width="1.2"/><rect x="1073" y="1400" width="53" height="54" fill="#0c1a66" stroke="#000" stroke-width="1.2"/><path d="M1126,1419.5 V1454 H1083 Z" fill="#e3cc2c"/><rect x="1082.5" y="1408.5" width="2" height="10.5" fill="#fff"/><text x="1086" y="1418.5" font-size="11" font-family="Liberation Sans" fill="#fff" textLength="30.5" lengthAdjust="spacingAndGlyphs">VECO</text><text x="1100" y="1452" font-size="9" font-weight="bold" font-family="Liberation Sans" fill="#c41010" transform="rotate(-40 1100 1452)">PARTS</text><path d="M1571.5,340.2 H1583 L1584,337.2 L1591,345 L1584,352.5 L1583,348.5 H1571.5 Z" fill="none" stroke="#000" stroke-width="1.5" stroke-linejoin="miter"/><path d="M1585.5,337.5 L1592,334 M1585.5,352.5 L1592,356.5" stroke="#000" stroke-width="1.3"/><path d="M1592,334 H1613 V356.7 H1592" fill="none" stroke="#000" stroke-width="1.8"/><path d="M1592.5,334.5 C1596,340 1596,350 1592.5,356" fill="none" stroke="#444" stroke-width="1.2"/><ellipse cx="1566.4" cy="413.7" rx="9.4" ry="23.8" fill="#b8b8b8"/><path d="M1565,394 L1568.5,397 L1566.5,400.5 L1569.5,404 L1568.5,408 C1572,410 1577,410.5 1582,410.5 V416.5 C1577,416.5 1572,417 1569,419 L1570,424 L1567.5,428 L1569.5,432 L1566,435.5 L1564,431 V396 Z" fill="#000"/><path d="M1582,402 C1578.5,406 1578.5,421 1582,425 L1586,425.5 V401.5 Z" fill="#fff" stroke="#000" stroke-width="1.4"/><path d="M1586,402 H1604 V424.7 H1586" fill="none" stroke="#000" stroke-width="2"/><path d="M1570.5,465 L1578,458.5 V461.8 H1589.5 V468.2 H1578 V471.5 Z M1589.5,486 L1582,479.5 V482.8 H1570.5 V489.2 H1582 V492.5 Z" fill="none" stroke="#000" stroke-width="1.5" stroke-linejoin="miter"/><path d="M1574,543 C1571,537 1574,531 1579,531 C1584,531 1586,535 1584,539 C1582,543 1577,543 1574.5,540 M1574,542 C1572,545 1573,547 1577,547 L1577,550" fill="none" stroke="#000" stroke-width="1.5"/><rect x="1554.5" y="574.5" width="51.0" height="52.0" fill="#cbba2c" stroke="#000" stroke-width="2"/><path d="M1580,582 V620 M1564,585 H1596 M1574,620 H1586 M1571,623.5 H1589" fill="none" stroke="#000" stroke-width="2.5"/><path d="M1564,586 L1558.5,604 H1569.5 Z M1596,586 L1590.5,604 H1601.5 Z" fill="none" stroke="#000" stroke-width="1.5"/><path d="M1558,604 C1559,608 1569,608 1570,604 Z M1590,604 C1591,608 1601,608 1602,604 Z" fill="#000"/><path d="M1577,598 L1580,585 L1583,598 V618 H1577 Z" fill="#000"/><rect x="1554" y="637" width="51.5" height="51.5" fill="#cbba2c" stroke="#000" stroke-width="2"/><path d="M1563,656.5 H1588 L1596,662 L1588,667.5 H1563 Z" fill="#fff" stroke="#000" stroke-width="1.4"/><path d="M1570,656.5 V667.5" stroke="#000" stroke-width="1"/><ellipse cx="1576" cy="662" rx="5" ry="12" fill="none" stroke="#000" stroke-width="1.4"/><rect x="1554" y="697.5" width="52" height="52.0" fill="#cbba2c" stroke="#000" stroke-width="2"/><circle cx="1582" cy="723.5" r="14" fill="#fff" stroke="#000" stroke-width="1.3"/><path d="M1576,713 C1570,718 1570,730 1577,735" fill="none" stroke="#000" stroke-width="2"/><path d="M1568,712 C1562,719 1562,731 1567,737 M1565,716 C1562,722 1562,728 1565,734" fill="none" stroke="#000" stroke-width="1.3"/><rect x="1554" y="761.5" width="51.5" height="51.0" fill="#cbba2c" stroke="#000" stroke-width="2"/><path d="M1566.5,787 L1586,775.5 C1590,780 1590,792 1586,797.5 Z" fill="none" stroke="#000" stroke-width="1.6"/><circle cx="1586" cy="775.5" r="2" fill="#000"/><circle cx="1586" cy="797.5" r="2" fill="#000"/><path d="M1577,828 H1583.5 V838 H1587 L1580.2,846 L1573.5,838 H1577 Z" fill="#fff" stroke="#000" stroke-width="1.4"/><circle cx="1580" cy="851.5" r="3" fill="#000"/><path d="M1573,855 H1587 L1596.5,873 H1563.5 Z" fill="#000"/><circle cx="1580" cy="914" r="21" fill="#fff" stroke="#000" stroke-width="1.3"/><line x1="1577.0" y1="897.3" x2="1578.1" y2="903.2" stroke="#c9b92a" stroke-width="3"/><line x1="1571.5" y1="899.3" x2="1574.5" y2="904.5" stroke="#c9b92a" stroke-width="3"/><line x1="1567.0" y1="903.1" x2="1571.2" y2="906.6" stroke="#c9b92a" stroke-width="3"/><line x1="1564.0" y1="908.2" x2="1568.3" y2="909.7" stroke="#c9b92a" stroke-width="3"/><line x1="1563.0" y1="913.4" x2="1566.5" y2="913.5" stroke="#c9b92a" stroke-width="3"/><line x1="1563.6" y1="918.4" x2="1566.0" y2="917.8" stroke="#c9b92a" stroke-width="3"/><circle cx="1580" cy="978" r="21" fill="#fff" stroke="#000" stroke-width="1.5"/><path d="M1578,961 H1583 V985 H1578 Z M1583,964 H1589 M1583,969 H1587 M1583,974 H1589" fill="#000" stroke="#000" stroke-width="2"/><circle cx="1580" cy="986" r="3.5" fill="#000"/><path d="M1563,990 C1567,986 1571,986 1575,989 M1585,989 C1589,986 1593,986 1597,990 M1564,995 C1570,991 1576,991 1580,994 C1585,991 1590,991 1596,995" fill="none" stroke="#000" stroke-width="1.8"/><circle cx="1578.5" cy="1034" r="20.5" fill="#fff" stroke="#000" stroke-width="1.5"/><path d="M1562,1027 C1565,1018 1572,1015 1578,1015 C1585,1015 1592,1018 1595,1027" fill="none" stroke="#000" stroke-width="1.3" stroke-dasharray="6,1.5"/><path d="M1562,1035 H1579" stroke="#000" stroke-width="1"/><text x="1574" y="1045" font-size="8" font-family="Liberation Sans" fill="#000">bar</text><path d="M1572.5,1084.5 L1589,1093.5 L1572.5,1102.5" fill="none" stroke="#000" stroke-width="1.3"/><path d="M1589,1152 L1572.5,1161 L1589,1170.5" fill="none" stroke="#000" stroke-width="1.3"/><path d="M1559,1213 L1557,1243 M1567.5,1213 L1570,1243 M1558.5,1219 H1567.5 M1558,1225 H1568.5 M1557.5,1231 H1569 M1557,1237 H1569.5 M1555.5,1243 H1571" fill="none" stroke="#000" stroke-width="1.3"/><rect x="1554" y="1270" width="50.5" height="52.5" fill="#cbba2c" stroke="#000" stroke-width="2"/><circle cx="1579" cy="1296" r="20" fill="#fff" stroke="#000" stroke-width="1.5"/><path d="M1579.3,1277 V1315 M1561,1296 H1597" stroke="#000" stroke-width="1.1"/><line x1="1579.3" y1="1296" x2="1570.3" y2="1289" stroke="#000" stroke-width="1.2"/><path d="M1572.5,1289.5 L1570.3,1289 L1570.0,1291.5 Z" fill="#000" stroke="#000" stroke-width="1"/><line x1="1579.3" y1="1296" x2="1588.3" y2="1289" stroke="#000" stroke-width="1.2"/><path d="M1586.1,1289.5 L1588.3,1289 L1588.6,1291.5 Z" fill="#000" stroke="#000" stroke-width="1"/><line x1="1579.3" y1="1296" x2="1570.3" y2="1303" stroke="#000" stroke-width="1.2"/><path d="M1572.5,1302.5 L1570.3,1303 L1570.0,1300.5 Z" fill="#000" stroke="#000" stroke-width="1"/><line x1="1579.3" y1="1296" x2="1588.3" y2="1303" stroke="#000" stroke-width="1.2"/><path d="M1586.1,1302.5 L1588.3,1303 L1588.6,1300.5 Z" fill="#000" stroke="#000" stroke-width="1"/><path d="M1576,1315 L1579.3,1310 L1582.5,1315 M1576,1277.5 L1579.3,1281 L1582.5,1277.5 M1596,1292.5 L1593,1296 L1596,1299.5" fill="none" stroke="#000" stroke-width="1.1"/><circle cx="1579.3" cy="1296" r="3.2" fill="#0a1a5a"/><rect x="1554.5" y="1338" width="51.0" height="52.5" fill="#cbba2c" stroke="#000" stroke-width="2"/><circle cx="1580" cy="1364" r="20" fill="#fff" stroke="#000" stroke-width="1.5"/><path d="M1580,1347.5 V1380.5 M1563.5,1364 H1596.5" stroke="#000" stroke-width="1.3"/><path d="M1573,1357 L1587,1371 M1587,1357 L1573,1371" stroke="#000" stroke-width="1"/><circle cx="1580" cy="1364" r="5.5" fill="#f2dc1c" stroke="#000" stroke-width="2.2"/></svg><div class="pt" style="left:1156.5px;top:322.01px;line-height:21.8px">Removal<br>Disconnection</div><div class="pt" style="left:1156.5px;top:390.51px;line-height:21.8px">Refitting<br>Connection</div><div class="pt" style="left:1156.5px;top:451.51px;line-height:21.8px">Removal<br>Disassembly</div><div class="pt" style="left:1156.5px;top:514.81px;line-height:21.8px">Fitting in place<br>Assembly</div><div class="pt" style="left:1156.5px;top:586.31px;line-height:22px">Tighten to torque</div><div class="pt" style="left:1156.5px;top:648.81px;line-height:22px">Tighten to torque + angle value</div><div class="pt" style="left:1156.5px;top:712.51px;line-height:22px">Press or caulk</div><div class="pt" style="left:1156.5px;top:765.61px;line-height:21.8px">Regulation<br>Adjustment</div><div class="pt" style="left:1156.5px;top:828.51px;line-height:21.8px">Visual inspection<br>Fitting position check</div><div class="pt" style="left:1156.5px;top:884.01px;line-height:21.0px">Measurement<br>Value to find<br>Check</div><div class="pt" style="left:1156.5px;top:968.01px;line-height:22px">Equipment</div><div class="pt" style="left:1156.5px;top:1011.51px;line-height:21.8px">Surface for machining<br>Machine finish</div><div class="pt" style="left:1156.5px;top:1069.31px;line-height:21.8px">Interference<br>Strained assembly</div><div class="pt" style="left:1156.5px;top:1138.51px;line-height:21.8px">Thickness<br>Clearance</div><div class="pt" style="left:1156.5px;top:1197.01px;line-height:21.0px">Lubrication<br>Damp<br>Grease</div><div class="pt" style="left:1156.5px;top:1274.51px;line-height:21.8px">Sealant<br>Adhesive</div><div class="pt" style="left:1156.5px;top:1351.41px;line-height:22px">Air bleeding</div><div class="pt" style="left:1156.5px;top:1406.31px;line-height:21.8px">Replacement<br>Original spare parts</div><div class="pt" style="left:1637px;top:332.81px;line-height:22px">Intake</div><div class="pt" style="left:1637px;top:401.31px;line-height:22px">Exhaust</div><div class="pt" style="left:1637px;top:462.31px;line-height:22px">Operation</div><div class="pt" style="left:1637px;top:523.81px;line-height:22px">Compression ratio</div><div class="pt" style="left:1637px;top:575.51px;line-height:21.8px">Tolerance<br>Weight difference</div><div class="pt" style="left:1637px;top:648.81px;line-height:22px">Rolling torque</div><div class="pt" style="left:1637px;top:712.71px;line-height:22px">Rotation</div><div class="pt" style="left:1637px;top:764.01px;line-height:21.8px">Angle<br>Angular value</div><div class="pt" style="left:1637px;top:837.31px;line-height:22px">Preload</div><div class="pt" style="left:1637px;top:902.71px;line-height:22px">Number of revolutions</div><div class="pt" style="left:1637px;top:967.81px;line-height:22px">Temperature</div><div class="pt" style="left:1637px;top:1022.31px;line-height:22px">Pressure</div><div class="pt" style="left:1637px;top:1062.61px;line-height:21.0px">Oversized<br>Higher than....<br>Maximum, peak</div><div class="pt" style="left:1637px;top:1130.11px;line-height:21.0px">Undersized<br>Less than....<br>Minimum</div><div class="pt" style="left:1637px;top:1196.41px;line-height:21.0px">Selection<br>Classes<br>Oversizing</div><div class="pt" style="left:1637px;top:1264.81px;line-height:21.0px">Temperature &lt; 0 &#176;C<br>Cold<br>Winter</div><div class="pt" style="left:1637px;top:1331.81px;line-height:21.0px">Temperature &gt; 0 &#176;C<br>Hot<br>Summer</div><div class="a" style="left:1413px;top:220px;font-size:24px;letter-spacing:0.82px;color:#3d3d3d;white-space:nowrap">Aquila Trucks Centres</div><div class="a" style="left:1051px;top:263.5px;font-size:22px;font-weight:bold;color:#0a0a14;white-space:nowrap;transform:scaleX(0.957);transform-origin:0 0">SYMBOLS - ASSISTANCE OPERATIONS</div>
</body></html>
